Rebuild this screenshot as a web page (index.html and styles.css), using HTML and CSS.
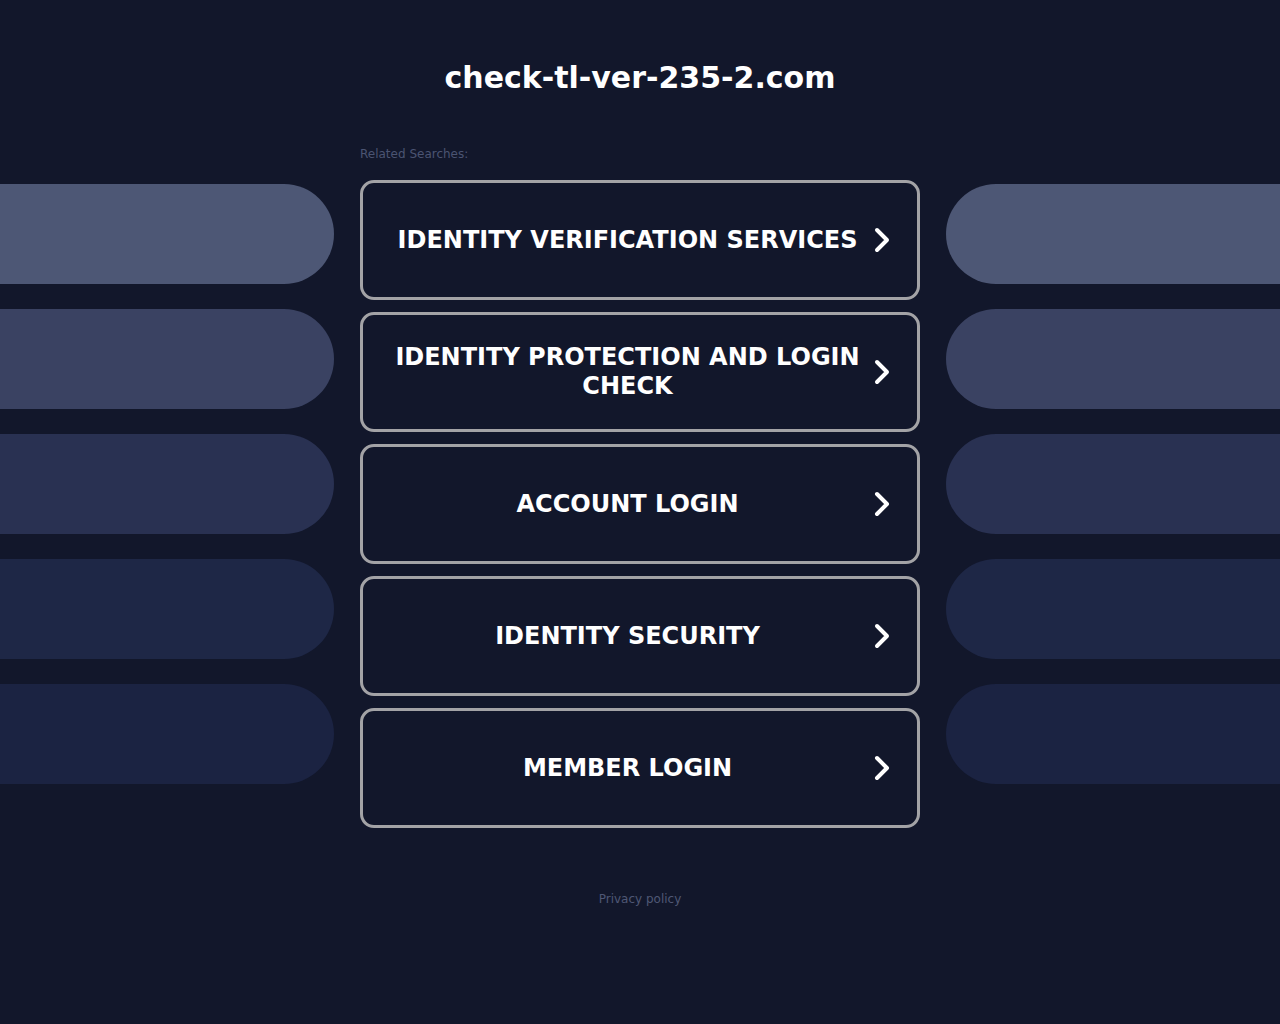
FILE: index.html
```html
<!DOCTYPE html>
<html lang="en">
<head>
<meta charset="utf-8">
<title>check-tl-ver-235-2.com</title>
<link rel="stylesheet" href="styles.css">
</head>
<body>
<header class="header">
  <h1 class="domain">check-tl-ver-235-2.com</h1>
</header>
<div class="row">
  <div class="side side-left">
    <div class="pill p1"></div>
    <div class="pill p2"></div>
    <div class="pill p3"></div>
    <div class="pill p4"></div>
    <div class="pill p5"></div>
  </div>
  <main class="center">
    <div class="label">Related Searches:</div>
    <a class="btn" href="#"><span class="btn-text">IDENTITY VERIFICATION SERVICES</span><svg class="chev" width="16" height="26" viewBox="0 0 16 26"><path d="M3 3 L13 13 L3 23" fill="none" stroke="#fff" stroke-width="4" stroke-linecap="round" stroke-linejoin="round"/></svg></a>
    <a class="btn" href="#"><span class="btn-text">IDENTITY PROTECTION AND LOGIN CHECK</span><svg class="chev" width="16" height="26" viewBox="0 0 16 26"><path d="M3 3 L13 13 L3 23" fill="none" stroke="#fff" stroke-width="4" stroke-linecap="round" stroke-linejoin="round"/></svg></a>
    <a class="btn" href="#"><span class="btn-text">ACCOUNT LOGIN</span><svg class="chev" width="16" height="26" viewBox="0 0 16 26"><path d="M3 3 L13 13 L3 23" fill="none" stroke="#fff" stroke-width="4" stroke-linecap="round" stroke-linejoin="round"/></svg></a>
    <a class="btn" href="#"><span class="btn-text">IDENTITY SECURITY</span><svg class="chev" width="16" height="26" viewBox="0 0 16 26"><path d="M3 3 L13 13 L3 23" fill="none" stroke="#fff" stroke-width="4" stroke-linecap="round" stroke-linejoin="round"/></svg></a>
    <a class="btn" href="#"><span class="btn-text">MEMBER LOGIN</span><svg class="chev" width="16" height="26" viewBox="0 0 16 26"><path d="M3 3 L13 13 L3 23" fill="none" stroke="#fff" stroke-width="4" stroke-linecap="round" stroke-linejoin="round"/></svg></a>
    <footer class="footer"><a class="privacy" href="#">Privacy policy</a></footer>
  </main>
  <div class="side side-right">
    <div class="pill p1"></div>
    <div class="pill p2"></div>
    <div class="pill p3"></div>
    <div class="pill p4"></div>
    <div class="pill p5"></div>
  </div>
</div>
</body>
</html>
```

FILE: styles.css
```css
html, body {
  margin: 0;
  padding: 0;
}
body {
  background: #12172b;
  font-family: "DejaVu Sans", "Liberation Sans", sans-serif;
  color: #fff;
  min-height: 1024px;
}
.header {
  padding-top: 60px;
  text-align: center;
}
.domain {
  margin: 0;
  font-size: 30px;
  line-height: 36px;
  font-weight: bold;
  color: #fff;
}
.row {
  display: flex;
  gap: 26px;
  margin-top: 50px;
}
.side {
  width: 334px;
  flex: 0 0 334px;
  padding-top: 38px;
  display: flex;
  flex-direction: column;
  gap: 25px;
}
.pill {
  height: 100px;
}
.side-left .pill {
  border-radius: 0 50px 50px 0;
}
.side-right .pill {
  border-radius: 50px 0 0 50px;
}
.p1 { background: #4d5775; }
.p2 { background: #3a4262; }
.p3 { background: #293152; }
.p4 { background: #1e2746; }
.p5 { background: #1b2342; }
.center {
  width: 560px;
  flex: 0 0 560px;
  display: flex;
  flex-direction: column;
}
.label {
  font-size: 12px;
  line-height: 16px;
  color: #4b5472;
  margin-bottom: 18px;
}
.btn {
  box-sizing: border-box;
  height: 120px;
  margin-bottom: 12px;
  border: 3px solid #a3a3a6;
  border-radius: 14px;
  padding: 0 27px 0 21px;
  display: flex;
  align-items: center;
  gap: 3px;
  text-decoration: none;
  color: #fff;
  background: #12172b;
}
.btn-text {
  flex: 1;
  text-align: center;
  font-size: 24px;
  line-height: 29px;
  font-weight: bold;
}
.chev {
  flex: 0 0 16px;
  display: block;
}
.footer {
  margin-top: 48px;
  text-align: center;
}
.privacy {
  font-size: 12px;
  line-height: 16px;
  color: #4f5775;
  text-decoration: none;
}
```
